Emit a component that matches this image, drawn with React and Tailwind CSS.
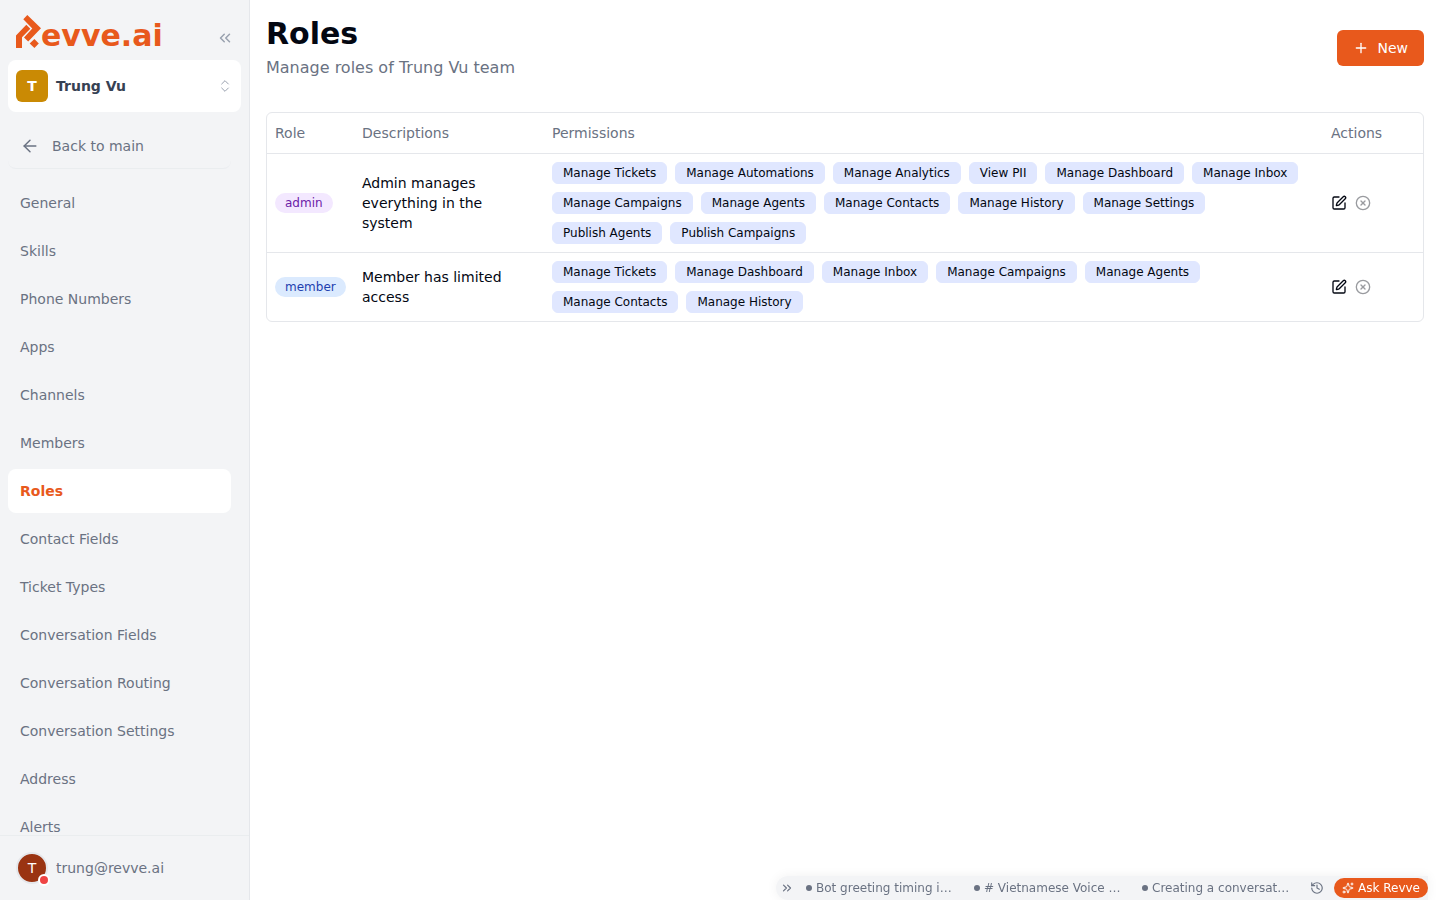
import {
  ArrowLeft,
  ChevronsLeft,
  ChevronsRight,
  ChevronsUpDown,
  CircleX,
  History,
  Plus,
  Sparkles,
  SquarePen,
} from "lucide-react";
import clsx from "clsx";

const navItems = [
  "General",
  "Skills",
  "Phone Numbers",
  "Apps",
  "Channels",
  "Members",
  "Roles",
  "Contact Fields",
  "Ticket Types",
  "Conversation Fields",
  "Conversation Routing",
  "Conversation Settings",
  "Address",
  "Alerts",
];

const roles = [
  {
    name: "admin",
    color: "bg-[#f3e8ff] text-[#6b21a8]",
    description: "Admin manages everything in the system",
    permissions: [
      "Manage Tickets",
      "Manage Automations",
      "Manage Analytics",
      "View PII",
      "Manage Dashboard",
      "Manage Inbox",
      "Manage Campaigns",
      "Manage Agents",
      "Manage Contacts",
      "Manage History",
      "Manage Settings",
      "Publish Agents",
      "Publish Campaigns",
    ],
  },
  {
    name: "member",
    color: "bg-[#dbeafe] text-[#1e40af]",
    description: "Member has limited access",
    permissions: [
      "Manage Tickets",
      "Manage Dashboard",
      "Manage Inbox",
      "Manage Campaigns",
      "Manage Agents",
      "Manage Contacts",
      "Manage History",
    ],
  },
];

const chats = [
  "Bot greeting timing i…",
  "# Vietnamese Voice …",
  "Creating a conversat…",
];

function Logo() {
  return (
    <a href="#" className="flex items-end text-[#e8591c]">
      <svg width="25" height="34" viewBox="0 0 25 34" fill="currentColor" aria-hidden="true">
        <path d="M0 33V20.500L10.300 9.800l4 4L6 22.300V33z" />
        <path d="M11.300 0L25 13.200 12.200 26.500 8 22.400 16.300 13.500 7.300 4.300z" />
        <path d="M18.400 24l4.400 4.500-4.400 4.500-4.700-4.500z" />
      </svg>
      <span className="text-3xl leading-[26px] font-bold">evve.ai</span>
    </a>
  );
}

function Sidebar() {
  return (
    <aside className="flex w-[250px] shrink-0 flex-col border-r border-gray-200 bg-gray-100 text-sm text-gray-500">
      <div className="flex h-15 items-center justify-between pt-1 pr-4 pl-4">
        <Logo />
        <button aria-label="Collapse sidebar" className="mt-3 -mr-px text-gray-400">
          <ChevronsLeft size={18} />
        </button>
      </div>
      <div className="px-2">
        <button className="flex h-13 w-full items-center gap-2 rounded-lg bg-white p-2 text-left font-bold text-gray-700">
          <span className="flex size-8 items-center justify-center rounded-md bg-[#ca8a04] text-white">T</span>
          <span className="flex-1">Trung Vu</span>
          <ChevronsUpDown size={16} strokeWidth={1.5} className="text-gray-400" />
        </button>
      </div>
      <div className="flex min-h-0 flex-1 flex-col pt-3 pr-[18px] pl-2">
        <a href="#" className="flex h-[45px] shrink-0 items-center gap-3 rounded-lg border-b border-gray-200/60 px-3">
          <ArrowLeft size={20} strokeWidth={1.75} />
          Back to main
        </a>
        <nav className="mt-3 flex min-h-0 flex-1 flex-col gap-1 overflow-hidden">
          {navItems.map((item) => (
            <a
              key={item}
              href="#"
              className={clsx(
                "flex h-11 shrink-0 items-center rounded-lg px-3",
                item === "Roles" && "bg-white font-bold text-[#e8591c]"
              )}
            >
              {item}
            </a>
          ))}
        </nav>
      </div>
      <div className="flex h-[65px] shrink-0 items-center gap-2 border-t border-gray-200/60 px-4">
        <div className="relative flex size-8 items-center justify-center rounded-full border-2 border-gray-200 bg-[#9a3412] text-white">
          T
          <span className="absolute -right-1 -bottom-1 size-3 rounded-full border-2 border-white bg-[#ef4444]" />
        </div>
        trung@revve.ai
      </div>
    </aside>
  );
}

function RolesTable() {
  return (
    <div className="overflow-hidden rounded-md border border-gray-200">
      <table className="w-full text-left text-sm">
        <thead>
          <tr className="h-10 text-gray-500">
            <th className="w-[87px] px-2 font-normal">Role</th>
            <th className="w-[190px] px-2 font-normal">Descriptions</th>
            <th className="px-2 font-normal">Permissions</th>
            <th className="w-[100px] px-2 font-normal">Actions</th>
          </tr>
        </thead>
        <tbody>
          {roles.map((role) => (
            <tr key={role.name} className="border-t border-gray-200">
              <td className="p-2">
                <span className={clsx("inline-block rounded-full px-2.5 py-0.5 text-xs", role.color)}>
                  {role.name}
                </span>
              </td>
              <td className="p-2">{role.description}</td>
              <td className="p-2">
                <div className="flex flex-wrap gap-2">
                  {role.permissions.map((permission) => (
                    <span
                      key={permission}
                      className="rounded-md border border-indigo-100 bg-indigo-100 px-2.5 py-0.5 text-xs text-gray-950"
                    >
                      {permission}
                    </span>
                  ))}
                </div>
              </td>
              <td className="p-2">
                <div className="flex gap-2">
                  <button aria-label={`Edit ${role.name}`}>
                    <SquarePen size={16} />
                  </button>
                  <button aria-label={`Delete ${role.name}`} disabled className="opacity-40">
                    <CircleX size={16} />
                  </button>
                </div>
              </td>
            </tr>
          ))}
        </tbody>
      </table>
    </div>
  );
}

function ChatBar() {
  return (
    <div className="fixed right-3 bottom-0 flex h-6 items-center rounded-l-full bg-gray-100 text-xs text-gray-500 shadow-[0_0_12px_rgba(0,0,0,0.06)]">
      <button aria-label="Hide chats" className="mr-3 ml-1">
        <ChevronsRight size={14} />
      </button>
      {chats.map((chat) => (
        <button key={chat} className="mr-5 flex w-[148px] items-center gap-1 text-left whitespace-nowrap">
          <span className="size-1.5 shrink-0 rounded-full bg-gray-500" />
          <span>{chat}</span>
        </button>
      ))}
      <button aria-label="History" className="mr-2.5">
        <History size={14} />
      </button>
      <button className="flex h-5 items-center gap-1 rounded-full bg-[#e8591c] px-2 text-white">
        <Sparkles size={12} />
        Ask Revve
      </button>
    </div>
  );
}

export default function App() {
  return (
    <div className="flex h-screen bg-white font-['DejaVu_Sans',sans-serif] text-gray-950">
      <Sidebar />
      <main className="flex-1 p-4">
        <header className="mb-8 flex items-center justify-between">
          <div>
            <h1 className="text-3xl font-bold">Roles</h1>
            <p className="mt-1 text-gray-500">Manage roles of Trung Vu team</p>
          </div>
          <button className="flex h-9 items-center gap-2 rounded-md bg-[#e8591c] px-4 text-sm text-white">
            <Plus size={16} />
            New
          </button>
        </header>
        <RolesTable />
      </main>
      <ChatBar />
    </div>
  );
}
